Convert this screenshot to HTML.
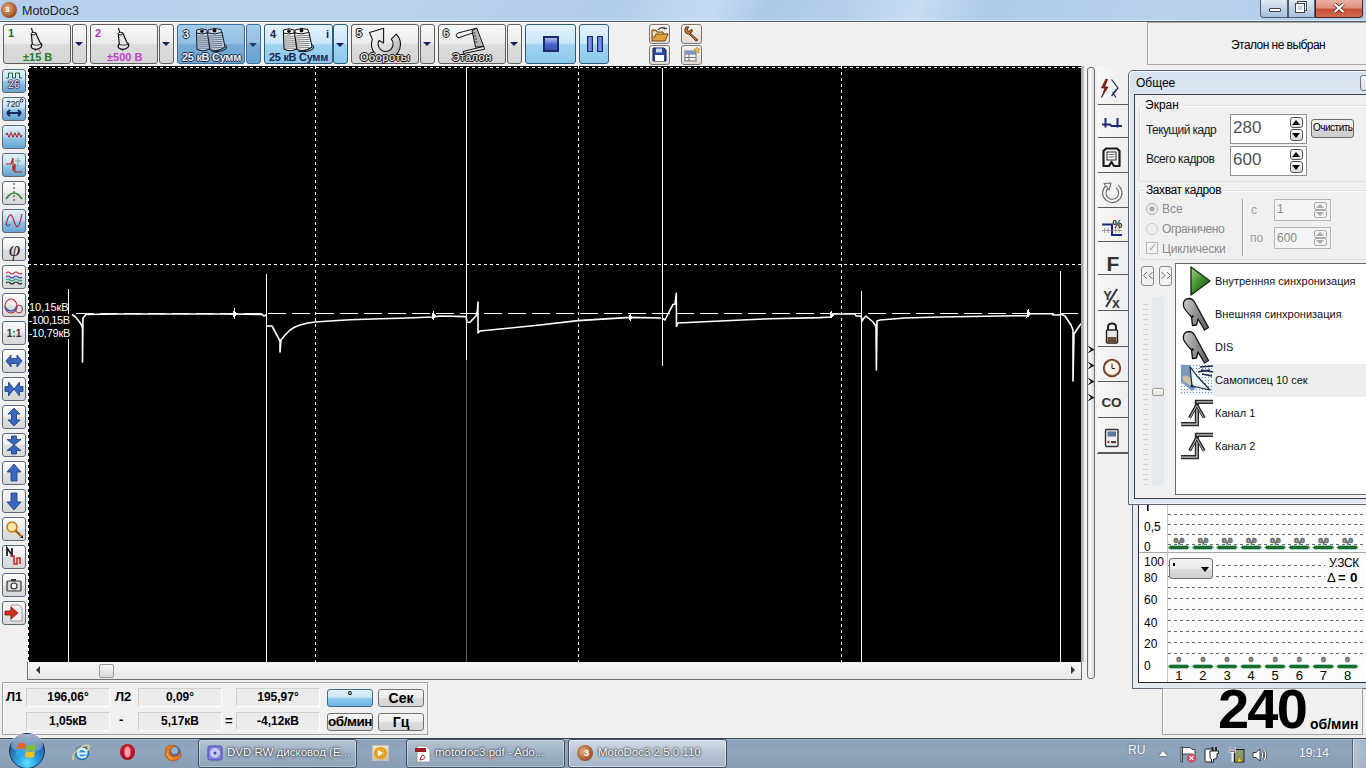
<!DOCTYPE html>
<html><head><meta charset="utf-8">
<style>
*{box-sizing:border-box}
html,body{margin:0;padding:0}
body{width:1366px;height:768px;overflow:hidden;position:relative;background:#f0f0f0;font-family:"Liberation Sans",sans-serif;font-size:12px;color:#000}
.a{position:absolute}
.tb{position:absolute;border:1px solid #8a8a8a;border-radius:3px;background:linear-gradient(#f7f7f7 0%,#ececec 48%,#dcdcdc 52%,#d5d5d5 100%)}
.tbb{position:absolute;border:1px solid #3a6f9a;border-radius:3px;background:linear-gradient(#a6cce8 0%,#92bfe2 48%,#78acd6 52%,#6aa2d0 100%)}
.tbl{position:absolute;border:1px solid #3c7fb1;border-radius:3px;background:linear-gradient(#e4f3fc 0%,#c9e7f7 48%,#a0d4f0 52%,#8cc8ea 100%)}
.dd{position:absolute;width:0;height:0;border-left:5px solid transparent;border-right:5px solid transparent;border-top:6px solid #15205a}
.num{position:absolute;font-size:13px;font-weight:bold;line-height:13px}
.lab{position:absolute;font-size:12px;font-weight:bold;line-height:12px;white-space:nowrap}
.lb{position:absolute;left:2px;width:24px;height:24px;border:1px solid #5a6a78;border-radius:3px}
.lbb{background:linear-gradient(#e2f3fb 0%,#bfe0f2 45%,#92c6e4 55%,#64a4d0 100%)}
.lbg{background:linear-gradient(#fafafa 0%,#eeeeee 48%,#e0e0e0 52%,#d8d8d8 100%)}
.rb{position:absolute;left:1097px;width:31px;height:34px;border-bottom:2px solid #6a6a6a;background:linear-gradient(#f4f4f4,#ececec)}
</style></head><body>

<div class="a" style="left:0;top:0;width:1366px;height:20px;background:linear-gradient(115deg,#b4cfec 0%,#bad4ee 25%,#b2cdea 45%,#c4dcf3 52%,#adc9e8 56%,#b6d0ec 62%,#c6ddf3 67%,#afcbe9 72%,#b8d2ed 85%,#b2cdea 100%)"></div><div class="a" style="left:0;top:20px;width:1366px;height:1px;background:#d8ecfa"></div><div class="a" style="left:0;top:21px;width:1366px;height:1px;background:#4e5a68"></div><div class="a" style="left:0;top:22px;width:1366px;height:1px;background:#fbfbfb"></div>
<div class="a" style="left:1px;top:2px;width:16px;height:16px;border-radius:50%;background:radial-gradient(circle at 40% 40%,#e6b088,#a45428 65%,#6a2c10)"></div>
<div class="a" style="left:5px;top:6px;font-size:8px;font-weight:bold;color:#fff;line-height:8px">3</div>
<div class="a" style="left:22px;top:4px;font-size:12.5px;color:#1a1a1a;line-height:15px">MotoDoc3</div>
<div class="a" style="left:1260px;top:0;width:28px;height:18px;border:1px solid #4d5f78;border-top:none;border-radius:0 0 0 4px;background:linear-gradient(#dde9f5,#c2d4e8 50%,#a9c0da)"></div>
<div class="a" style="left:1269px;top:8px;width:12px;height:4px;background:#fff;border:1px solid #3a4454;border-radius:1px"></div>
<div class="a" style="left:1288px;top:0;width:27px;height:18px;border:1px solid #4d5f78;border-top:none;background:linear-gradient(#dde9f5,#c2d4e8 50%,#a9c0da)"></div>
<div class="a" style="left:1298px;top:2px;width:8px;height:8px;border:2px solid #fff;box-shadow:0 0 0 1px #3a4454"></div><div class="a" style="left:1296px;top:4px;width:8px;height:8px;border:2px solid #fff;box-shadow:0 0 0 1px #3a4454;background:#c0d2e6"></div>
<div class="a" style="left:1315px;top:0;width:48px;height:18px;border:1px solid #4a2020;border-top:none;border-radius:0 0 4px 0;background:linear-gradient(#eab0a4 0%,#e09080 45%,#c8503a 55%,#d06a50 100%)"></div><svg class="a" style="left:1333px;top:3px" width="12" height="10" viewBox="0 0 12 10"><path d="M1.5 1 L10.5 9 M10.5 1 L1.5 9" stroke="#3a2020" stroke-width="3.6"/><path d="M1.5 1 L10.5 9 M10.5 1 L1.5 9" stroke="#fff" stroke-width="2.2"/></svg>

<!-- toolbar buttons -->
<div class="tb" style="left:3px;top:24px;width:68px;height:40px;border-color:#5e5e5e"></div>
<div class="num" style="left:8px;top:27px;color:#1d6b2c;font-size:11px">1</div>
<svg class="a" style="left:26px;top:27px" width="20" height="26" viewBox="0 0 20 26"><path d="M5.4 1 L6.8 5.5" stroke="#222" stroke-width="1.2"/><path d="M5.3 7 L6.3 17 Q4.3 18.5 5.8 21 Q9 23.2 13 21.6 Q16.6 19.6 15.6 17 L14 15.5 L9.6 5.8 Q7 4.8 5.3 7 Z" fill="#e6e6e6" stroke="#111" stroke-width="1.2" stroke-linejoin="round"/><ellipse cx="7.5" cy="6.6" rx="2.2" ry="1.3" fill="#fff" stroke="#111" stroke-width="1"/><path d="M6.3 17.5 Q10 19 15 17.5" fill="none" stroke="#222" stroke-width="0.9"/><path d="M8 22 L9.5 24 L11 22" fill="#222"/><path d="M12 22 L15 26" stroke="#9a4aa0" stroke-width="1"/></svg>
<div class="lab" style="left:23px;top:51px;color:#237a30;font-size:11px">±15 В</div>
<div class="tb" style="left:72px;top:24px;width:15px;height:40px;border-color:#5e5e5e"></div>
<div class="dd" style="left:75px;top:42px;border-left-width:4px;border-right-width:4px;border-top-width:4px"></div>

<div class="tb" style="left:90px;top:24px;width:68px;height:40px;border-color:#5e5e5e"></div>
<div class="num" style="left:95px;top:27px;color:#b038b8;font-size:11px">2</div>
<svg class="a" style="left:113px;top:27px" width="20" height="26" viewBox="0 0 20 26"><path d="M5.4 1 L6.8 5.5" stroke="#222" stroke-width="1.2"/><path d="M5.3 7 L6.3 17 Q4.3 18.5 5.8 21 Q9 23.2 13 21.6 Q16.6 19.6 15.6 17 L14 15.5 L9.6 5.8 Q7 4.8 5.3 7 Z" fill="#e6e6e6" stroke="#111" stroke-width="1.2" stroke-linejoin="round"/><ellipse cx="7.5" cy="6.6" rx="2.2" ry="1.3" fill="#fff" stroke="#111" stroke-width="1"/><path d="M6.3 17.5 Q10 19 15 17.5" fill="none" stroke="#222" stroke-width="0.9"/><path d="M8 22 L9.5 24 L11 22" fill="#222"/></svg>
<div class="lab" style="left:107px;top:51px;color:#c040c8;font-size:11px">±500 В</div>
<div class="tb" style="left:159px;top:24px;width:15px;height:40px;border-color:#5e5e5e"></div>
<div class="dd" style="left:162px;top:42px;border-left-width:4px;border-right-width:4px;border-top-width:4px"></div>

<div class="tbb" style="left:177px;top:24px;width:68px;height:40px"></div>
<div class="num" style="left:183px;top:28px;color:#e8f0f8;font-size:11px;text-shadow:1px 0 #1a2a44,-1px 0 #1a2a44,0 1px #1a2a44,0 -1px #1a2a44">3</div>
<svg class="a" style="left:194px;top:27px" width="36" height="26" viewBox="0 0 36 26"><path d="M2.5 6 Q8 3 14.5 6 L15.5 22 Q9 25.5 3 22 Z" fill="#c4d6e6" stroke="#1a2233" stroke-width="1.1"/><path d="M3.5 9 L14.5 9.3 M3.5 11 L14.5 11.3 M3.5 13 L14.5 13.3 M3.5 15 L14.5 15.3 M3.5 17 L14.5 17.3 M3.5 19 L14.5 19.3 M3.5 21 L14.5 21.3 " stroke="#1a2233" stroke-width="0.7" opacity="0.75"/><path d="M2.5 3 Q8 0.5 13 3 L13 6 Q8 8 2.5 6 Z" fill="#c4d6e6" stroke="#1a2233" stroke-width="1"/><circle cx="8" cy="4.3" r="1.8" fill="#111"/><path d="M13.5 6 Q21 2.5 28 5.5 L31 20 Q24 25.5 16 22.5 Z" fill="#c4d6e6" stroke="#1a2233" stroke-width="1.1"/><path d="M15 9 L28.5 8.4 M15 11 L28.5 10.4 M15 13 L28.5 12.4 M15 15 L28.5 14.4 M15 17 L28.5 16.4 M15 19 L28.5 18.4 M15 21 L28.5 20.4 " stroke="#1a2233" stroke-width="0.7" opacity="0.75"/><path d="M14 3 Q20.5 0 27 2.5 L27.5 5.5 Q21 8 14 6 Z" fill="#c4d6e6" stroke="#1a2233" stroke-width="1"/><circle cx="20.5" cy="3.5" r="1.9" fill="#111"/><path d="M30.5 17 Q34 19 32 22 Q26 26 17 24" fill="none" stroke="#1a2233" stroke-width="1"/></svg>
<div class="lab" style="left:182px;top:51px;color:#e8f0f8;font-size:11px;text-shadow:1px 0 #1a2a44,-1px 0 #1a2a44,0 1px #1a2a44,0 -1px #1a2a44;letter-spacing:-0.3px">25 кВ Сумм</div>
<div class="tbb" style="left:246px;top:24px;width:15px;height:40px"></div>
<div class="dd" style="left:249px;top:43px;border-left-width:4px;border-right-width:4px;border-top-width:4px;border-top-color:#1d3a6a"></div>

<div class="tbl" style="left:264px;top:24px;width:69px;height:40px;border-color:#2f5a7a"></div>
<div class="num" style="left:270px;top:28px;color:#1a2244;font-size:11px">4</div>
<div class="num" style="left:326px;top:28px;color:#1a2244;font-size:11px">i</div>
<svg class="a" style="left:281px;top:27px" width="36" height="26" viewBox="0 0 36 26"><path d="M2.5 6 Q8 3 14.5 6 L15.5 22 Q9 25.5 3 22 Z" fill="#f6f8fa" stroke="#111" stroke-width="1.1"/><path d="M3.5 9 L14.5 9.3 M3.5 11 L14.5 11.3 M3.5 13 L14.5 13.3 M3.5 15 L14.5 15.3 M3.5 17 L14.5 17.3 M3.5 19 L14.5 19.3 M3.5 21 L14.5 21.3 " stroke="#111" stroke-width="0.7" opacity="0.75"/><path d="M2.5 3 Q8 0.5 13 3 L13 6 Q8 8 2.5 6 Z" fill="#f6f8fa" stroke="#111" stroke-width="1"/><circle cx="8" cy="4.3" r="1.8" fill="#111"/><path d="M13.5 6 Q21 2.5 28 5.5 L31 20 Q24 25.5 16 22.5 Z" fill="#f6f8fa" stroke="#111" stroke-width="1.1"/><path d="M15 9 L28.5 8.4 M15 11 L28.5 10.4 M15 13 L28.5 12.4 M15 15 L28.5 14.4 M15 17 L28.5 16.4 M15 19 L28.5 18.4 M15 21 L28.5 20.4 " stroke="#111" stroke-width="0.7" opacity="0.75"/><path d="M14 3 Q20.5 0 27 2.5 L27.5 5.5 Q21 8 14 6 Z" fill="#f6f8fa" stroke="#111" stroke-width="1"/><circle cx="20.5" cy="3.5" r="1.9" fill="#111"/><path d="M30.5 17 Q34 19 32 22 Q26 26 17 24" fill="none" stroke="#111" stroke-width="1"/></svg>
<div class="lab" style="left:269px;top:51px;color:#1a2550;font-size:11px;letter-spacing:-0.3px">25 кВ Сумм</div>
<div class="tbl" style="left:333px;top:24px;width:15px;height:40px;border-color:#2f5a7a"></div>
<div class="dd" style="left:336px;top:43px;border-left-width:4px;border-right-width:4px;border-top-width:4px"></div>

<div class="tb" style="left:351px;top:24px;width:68px;height:40px;border-color:#5e5e5e"></div>
<div class="num" style="left:356px;top:27px;color:#ddd;font-size:11px;text-shadow:1px 0 #222,-1px 0 #222,0 1px #222,0 -1px #222">5</div>
<svg class="a" style="left:369px;top:27px" width="36" height="27" viewBox="0 0 36 27"><defs><linearGradient id="rg" x1="0" y1="0" x2="1" y2="1"><stop offset="0" stop-color="#fafafa"/><stop offset="0.6" stop-color="#d8d8d8"/><stop offset="1" stop-color="#9a9a9a"/></linearGradient></defs><path d="M27.25 7.15 A14.5 14.5 0 1 1 3.4 12.4 L0.5 5.5 L14.6 1.2 L14.6 16 L10 13.4 A7.5 7.5 0 1 0 22.3 12.1 Z" fill="url(#rg)" stroke="#111" stroke-width="1.1" stroke-linejoin="round"/></svg>
<div class="lab" style="left:360px;top:51px;color:#d8d8d8;font-size:11px;text-shadow:1px 0 #111,-1px 0 #111,0 1px #111,0 -1px #111">Обороты</div>
<div class="tb" style="left:420px;top:24px;width:15px;height:40px;border-color:#5e5e5e"></div>
<div class="dd" style="left:423px;top:42px;border-left-width:4px;border-right-width:4px;border-top-width:4px"></div>

<div class="tb" style="left:438px;top:24px;width:68px;height:40px;border-color:#5e5e5e"></div>
<div class="num" style="left:443px;top:27px;color:#ddd;font-size:11px;text-shadow:1px 0 #222,-1px 0 #222,0 1px #222,0 -1px #222">6</div>
<svg class="a" style="left:454px;top:27px" width="34" height="27" viewBox="0 0 34 27"><path d="M3 10 Q0.5 7.5 4 6 L22.5 1.2 L23 4.5 L5 10.6 Q4 10.9 3 10 Z" fill="#f4f4f4" stroke="#111" stroke-width="1"/><path d="M18 3.6 L22.8 1.2 L29.7 19.4 L21.6 20.2 Z" fill="#b8b8b8" stroke="#111" stroke-width="1"/><path d="M19.3 6 L21.3 6 M20 9 L22 9 M20.8 12 L22.8 12 M21.4 15 L23.4 15" stroke="#111" stroke-width="0.9"/><path d="M9 24.5 L29.8 19.4 L30.6 22.2 L9.5 26.5 Z" fill="#e8e8e8" stroke="#111" stroke-width="1"/></svg>
<div class="lab" style="left:452px;top:51px;color:#d8d8d8;font-size:11px;text-shadow:1px 0 #111,-1px 0 #111,0 1px #111,0 -1px #111">Эталон</div>
<div class="tb" style="left:507px;top:24px;width:15px;height:40px;border-color:#5e5e5e"></div>
<div class="dd" style="left:510px;top:42px;border-left-width:4px;border-right-width:4px;border-top-width:4px"></div>

<!-- stop / pause -->
<div class="tbl" style="left:525px;top:24px;width:51px;height:40px;border-color:#2f5a7a"></div>
<div class="a" style="left:543px;top:36px;width:16px;height:16px;border:2px solid #1a2a6a;background:linear-gradient(#a8b8ec 0%,#7890e0 30%,#4a62c8 55%,#3a52b8 100%)"></div>
<div class="tbl" style="left:579px;top:24px;width:30px;height:40px;border-color:#2f5a7a"></div>
<div class="a" style="left:587px;top:36px;width:6px;height:16px;border:1px solid #1a2a6a;background:linear-gradient(90deg,#4a62c8,#8aa0e8,#4a62c8)"></div>
<div class="a" style="left:597px;top:36px;width:6px;height:16px;border:1px solid #1a2a6a;background:linear-gradient(90deg,#4a62c8,#8aa0e8,#4a62c8)"></div>

<!-- small icons -->
<div class="tb" style="left:649px;top:24px;width:21px;height:20px;border-color:#777;background:linear-gradient(#f6f2ee,#e4ddd6)"></div>
<svg class="a" style="left:651px;top:26px" width="18" height="16" viewBox="0 0 18 16"><path d="M1 6 L1 15 L14 15 L17 8 L5 8 L3 12" fill="#e0a040" stroke="#6a4010" stroke-width="1"/><path d="M1 6 L1 4 L5 4 L6 6 L12 6 L12 8" fill="#f0c070" stroke="#6a4010" stroke-width="1"/><path d="M7 4 Q10 0 14 3 L13 1 M14 3 L16 2" stroke="#334" fill="none" stroke-width="1.2"/></svg>
<div class="tb" style="left:649px;top:45px;width:21px;height:20px;border-color:#777;background:linear-gradient(#f6f2ee,#e4ddd6)"></div>
<svg class="a" style="left:652px;top:47px" width="15" height="15" viewBox="0 0 15 15"><path d="M1 1 H12 L14 3 V14 H1 Z" fill="#2a4a9a" stroke="#102050"/><rect x="4" y="1.5" width="6" height="4" fill="#c8d4f0"/><rect x="3" y="8" width="9" height="6" fill="#fff"/></svg>
<div class="tb" style="left:681px;top:24px;width:21px;height:20px;border-color:#777;background:linear-gradient(#f6f2ee,#e4ddd6)"></div>
<svg class="a" style="left:683px;top:26px" width="17" height="16" viewBox="0 0 17 16"><path d="M2 3 Q2 0 6 1 L4 3 L5 5 L7 5 L9 3 Q10 7 7 7 L15 14 L13 15 L6 8 Q1 8 2 3 Z" fill="#c87830" stroke="#5a3010" stroke-width="1"/></svg>
<div class="tb" style="left:681px;top:45px;width:21px;height:20px;border-color:#777;background:linear-gradient(#f6f2ee,#e4ddd6)"></div>
<svg class="a" style="left:684px;top:47px" width="16" height="15" viewBox="0 0 16 15"><rect x="1" y="4" width="11" height="10" fill="#f4f4f4" stroke="#777"/><path d="M1 7H12M1 10.5H12M5 4V14" stroke="#777"/><rect x="1" y="4" width="11" height="3" fill="#7a9ac8"/><path d="M13 0 L14 2 L16 2 L14.5 3.5 L15 6 L13 4.5 L11 6 L11.5 3.5 L10 2 L12 2Z" fill="#e8c840" stroke="#8a6a10" stroke-width="0.5"/></svg>

<!-- status box -->
<div class="a" style="left:1147px;top:22px;width:222px;height:43px;border:1px solid #a8a8a8;border-right:none;background:#f0f0f0"></div>
<div class="a" style="left:1231px;top:39px;font-size:12px;line-height:13px;color:#000;letter-spacing:-0.55px">Эталон не выбран</div>

<!-- left toolbar -->
<div class="lb lbb" style="top:69px"></div>
<svg class="a" style="left:2px;top:69px" width="24" height="24" viewBox="0 0 24 24"><path d="M4 9 H6.5 V4 H10.5 V9 H13.5 V4 H17.5 V9 H20" fill="none" stroke="#2a5a40" stroke-width="1"/><text x="12" y="19" font-size="10" text-anchor="middle" fill="#eae4f2" stroke="#4a3a66" stroke-width="1.6" paint-order="stroke" font-family="Liberation Sans" letter-spacing="0.5">26</text></svg>
<div class="lb lbb" style="top:97px"></div>
<svg class="a" style="left:2px;top:97px" width="24" height="24" viewBox="0 0 24 24"><text x="11" y="10" font-size="8.5" text-anchor="middle" fill="#222" font-family="Liberation Sans">720</text><circle cx="19.5" cy="3.5" r="1.5" fill="none" stroke="#222"/><path d="M5 16 H19 M5 16 L8 13 M5 16 L8 19 M19 16 L16 13 M19 16 L16 19" stroke="#1a2a5a" stroke-width="2" fill="none"/></svg>
<div class="lb lbb" style="top:125px"></div>
<svg class="a" style="left:2px;top:125px" width="24" height="24" viewBox="0 0 24 24"><path d="M4 10 Q5 6 6 10 T8 10 T10 10 T12 10 T14 10 T16 10 T18 10 T20 10" fill="none" stroke="#a02030" stroke-width="1.1"/><path d="M9 6 V10 M16 6 V10" stroke="#b06060" stroke-width="0.8"/></svg>
<div class="lb lbb" style="top:153px"></div>
<svg class="a" style="left:2px;top:153px" width="24" height="24" viewBox="0 0 24 24"><path d="M4 11 H9 L11 5 L11 18 L13 11 V19 H20" fill="none" stroke="#c02020" stroke-width="1.2"/><path d="M16 5 V14 M13 8 H19" stroke="#7a9a7a" stroke-width="0.8" fill="none"/></svg>
<div class="lb lbg" style="top:181px"></div>
<svg class="a" style="left:2px;top:181px" width="24" height="24" viewBox="0 0 24 24"><path d="M12 2 V21" stroke="#333" stroke-width="1" stroke-dasharray="2 2"/><path d="M4 18 Q12 6 20 18" fill="none" stroke="#2a8a3a" stroke-width="1.6"/></svg>
<div class="lb lbb" style="top:209px"></div>
<svg class="a" style="left:2px;top:209px" width="24" height="24" viewBox="0 0 24 24"><path d="M9 3 V20 M14 3 V20 M18 3 V20" stroke="#d8a0b0" stroke-width="0.6" opacity="0.6"/><path d="M4 16 Q8 -2 12 12 T20 5" fill="none" stroke="#b02848" stroke-width="1.2"/><path d="M4 15 Q6 19 8 15" fill="none" stroke="#203870" stroke-width="1"/></svg>
<div class="lb lbg" style="top:237px"></div>
<svg class="a" style="left:2px;top:237px" width="24" height="24" viewBox="0 0 24 24"><text x="12.5" y="18.5" font-size="21" text-anchor="middle" fill="#2a2a2a" font-style="italic" font-family="Liberation Serif">φ</text></svg>
<div class="lb lbg" style="top:265px"></div>
<svg class="a" style="left:2px;top:265px" width="24" height="24" viewBox="0 0 24 24"><path d="M4 8 q2 -2 4 0 t4 0 t4 0 t4 0" fill="none" stroke="#c03040" stroke-width="1.1"/><path d="M4 12 q2 -2 4 0 t4 0 t4 0 t4 0" fill="none" stroke="#3040b0" stroke-width="1.1"/><path d="M4 15 q2 -2 4 0 t4 0 t4 0 t4 0" fill="none" stroke="#20a080" stroke-width="1.1"/><path d="M4 18 q2 -2 4 0 t4 0 t4 0 t4 0" fill="none" stroke="#222" stroke-width="1.1"/></svg>
<div class="lb lbg" style="top:293px"></div>
<svg class="a" style="left:2px;top:293px" width="24" height="24" viewBox="0 0 24 24"><ellipse cx="9" cy="13" rx="6" ry="7" fill="none" stroke="#c03030" stroke-width="1.2"/><path d="M3 14 Q9 22 15 14" fill="none" stroke="#3050c0" stroke-width="1.4"/><ellipse cx="17" cy="16" rx="3.5" ry="4" fill="none" stroke="#a03050" stroke-width="1"/></svg>
<div class="lb lbg" style="top:321px"></div>
<svg class="a" style="left:2px;top:321px" width="24" height="24" viewBox="0 0 24 24"><text x="12" y="16" font-size="10" font-weight="bold" text-anchor="middle" fill="#333" font-family="Liberation Sans">1:1</text></svg>
<div class="lb lbg" style="top:349px"></div>
<svg class="a" style="left:2px;top:349px" width="24" height="24" viewBox="0 0 24 24"><path d="M4 12 L9 6 V9.5 H15 V6 L20 12 L15 18 V14.5 H9 V18 Z" fill="#3a68c0" stroke="#1a3a7a" stroke-width="0.8"/></svg>
<div class="lb lbg" style="top:377px"></div>
<svg class="a" style="left:2px;top:377px" width="24" height="24" viewBox="0 0 24 24"><path d="M3 9.5 H6.5 V5 L12 12 L6.5 19 V14.5 H3 Z M21 9.5 H17.5 V5 L12 12 L17.5 19 V14.5 H21 Z" fill="#3a68c0" stroke="#1a3a7a" stroke-width="0.8"/></svg>
<div class="lb lbg" style="top:405px"></div>
<svg class="a" style="left:2px;top:405px" width="24" height="24" viewBox="0 0 24 24"><path d="M12 3 L18 9 H14.5 V15 H18 L12 21 L6 15 H9.5 V9 H6 Z" fill="#3a68c0" stroke="#1a3a7a" stroke-width="0.8"/></svg>
<div class="lb lbg" style="top:433px"></div>
<svg class="a" style="left:2px;top:433px" width="24" height="24" viewBox="0 0 24 24"><path d="M9.5 3 V6.5 H5 L12 12 L19 6.5 H14.5 V3 Z M9.5 21 V17.5 H5 L12 12 L19 17.5 H14.5 V21 Z" fill="#3a68c0" stroke="#1a3a7a" stroke-width="0.8"/></svg>
<div class="lb lbg" style="top:461px"></div>
<svg class="a" style="left:2px;top:461px" width="24" height="24" viewBox="0 0 24 24"><path d="M12 3 L19 11 H15 V20 H9 V11 H5 Z" fill="#3a68c0" stroke="#1a3a7a" stroke-width="0.8"/></svg>
<div class="lb lbg" style="top:489px"></div>
<svg class="a" style="left:2px;top:489px" width="24" height="24" viewBox="0 0 24 24"><path d="M12 21 L19 13 H15 V4 H9 V13 H5 Z" fill="#3a68c0" stroke="#1a3a7a" stroke-width="0.8"/></svg>
<div class="lb lbg" style="top:517px"></div>
<svg class="a" style="left:2px;top:517px" width="24" height="24" viewBox="0 0 24 24"><circle cx="10" cy="10" r="5" fill="#f8e8a0" stroke="#c08020" stroke-width="1.6"/><path d="M13.5 13.5 L19 19" stroke="#a06010" stroke-width="2.4"/><path d="M18 21 L21 21 L21 18" fill="#111"/></svg>
<div class="lb lbg" style="top:545px"></div>
<svg class="a" style="left:2px;top:545px" width="24" height="24" viewBox="0 0 24 24"><path d="M5 11 V3 L10 10 V3" fill="none" stroke="#222" stroke-width="1.8"/><path d="M8 11 H12 V19 H15 V13 H18 V19" fill="none" stroke="#c03030" stroke-width="1.6"/></svg>
<div class="lb lbg" style="top:573px"></div>
<svg class="a" style="left:2px;top:573px" width="24" height="24" viewBox="0 0 24 24"><rect x="5" y="8" width="14" height="10" rx="1" fill="#ddd" stroke="#333" stroke-width="1.2"/><circle cx="12" cy="13" r="3" fill="#fff" stroke="#333" stroke-width="1.2"/><rect x="9" y="6" width="5" height="2" fill="#333"/></svg>
<div class="lb lbg" style="top:601px"></div>
<svg class="a" style="left:2px;top:601px" width="24" height="24" viewBox="0 0 24 24"><path d="M9 4 H17 L20 7 V20 H9 Z" fill="#f6f0f0" stroke="#888" stroke-width="0.8"/><path d="M3 10 H9 V6 L16 12 L9 18 V14 H3 Z" fill="#d03020" stroke="#801010" stroke-width="0.8"/></svg>
<!-- scope -->
<svg class="a" style="left:28px;top:66px" width="1054" height="596" viewBox="28 66 1054 596" shape-rendering="crispEdges">
<rect x="28" y="66" width="1054" height="596" fill="#000"/>
<g stroke="#fff" stroke-width="1" stroke-dasharray="3 3">
<line x1="28" y1="67.5" x2="1082" y2="67.5"/>
<line x1="28.5" y1="66" x2="28.5" y2="662"/>
<line x1="28" y1="264.5" x2="1082" y2="264.5"/>
<line x1="315.5" y1="66" x2="315.5" y2="662"/>
<line x1="578.5" y1="66" x2="578.5" y2="662"/>
<line x1="841.5" y1="66" x2="841.5" y2="662"/>
</g>
<g stroke="#fff" stroke-width="1">
<line x1="68.5" y1="289" x2="68.5" y2="662"/>
<line x1="266.5" y1="274" x2="266.5" y2="662"/>
<line x1="466.5" y1="68" x2="466.5" y2="360"/>
<line x1="662.5" y1="68" x2="662.5" y2="366"/>
<line x1="861.5" y1="291" x2="861.5" y2="662"/>
<line x1="1060.5" y1="271" x2="1060.5" y2="662"/>
</g>
<line x1="466.5" y1="360" x2="466.5" y2="662" stroke="#555" stroke-width="1"/>
<line x1="70" y1="313.5" x2="1078" y2="313.5" stroke="#fff" stroke-width="1" stroke-dasharray="18 6" stroke-dashoffset="-5.6"/>
<g fill="none" stroke="#fff" stroke-width="1.6" stroke-linejoin="round" shape-rendering="auto">
<polyline points="72,314.5 75,316.5 78,320 81,324 82.5,328 82.5,362 83,318 86,314.5 120,314 234,314 262,314.5 264,316 266,315"/>
<polyline points="267,326 272,326 280,341 280,352 281,340 285,335 290,330 295,327 300,325 308,323 315,322 330,321 350,319.8 380,318.8 400,318.3 433,317 440,316 466,316.6"/>
<polyline points="466,316.6 467,322 470,322.3 474,318 476,316 477.5,310 478,302 478,333 480,331 490,330 540,325 578,320.6 630,317.4 661,318"/>
<polyline points="662,318 665,320 670,310 673,304.5 675,304 676.3,293.4 676.5,326.4 678,323 720,321 770,318.7 820,317.6 831,317 833,314 855,314 856,316 861,316"/>
<polyline points="861,316 862,321 864,318 866,316 873,322 876,326 876.4,370 877,321 880,320 905,318 940,317 1000,316 1028,315.6 1030,313.8 1052,313.8 1053,315 1061,315"/>
<polyline points="1061,314 1065,316 1071,325 1073,330 1073,381 1074,334 1080,325 1082,323"/>
</g>
<g fill="#fff" stroke="#fff" stroke-width="1">
<path d="M234.5 308 V319 M230 314 L236 314" /><path d="M233 311 L237 314 L233 317 Z"/>
<path d="M433.5 311 V320" /><path d="M432 313 L436 316 L432 319 Z"/>
<path d="M630.5 313 V321" /><path d="M629 315 L633 317.5 L629 320 Z"/>
<path d="M831.5 311 V318" /><path d="M830 312 L834 315 L830 318 Z"/>
<path d="M1028.5 309 V317" /><path d="M1027 310.5 L1031 313.5 L1027 316.5 Z"/>
</g>
<g font-family="Liberation Sans" font-size="11" fill="#fff">
<text x="29" y="311">10,15кВ</text>
<rect x="28" y="314" width="43" height="25" fill="#000" stroke="none"/>
<text x="28.5" y="323.5" letter-spacing="-0.45">-100,15В</text>
<text x="28.5" y="337" letter-spacing="-0.2">-10,79кВ</text>
</g>
</svg>
<!-- scope right border & scrollbar -->
<div class="a" style="left:1081px;top:66px;width:3px;height:596px;background:linear-gradient(90deg,#a0a0a0,#c8c8c8)"></div>
<div class="a" style="left:27px;top:662px;width:1055px;height:18px;border:1px solid #707070;border-top:none;background:linear-gradient(#f6f6f6,#e8e8e8)"></div>
<div class="a" style="left:36px;top:666px;width:0;height:0;border-top:4px solid transparent;border-bottom:4px solid transparent;border-right:4px solid #333"></div>
<div class="a" style="left:1071px;top:666px;width:0;height:0;border-top:4px solid transparent;border-bottom:4px solid transparent;border-left:4px solid #333"></div>
<div class="a" style="left:99px;top:664px;width:15px;height:14px;border:1px solid #9a9a9a;border-radius:2px;background:linear-gradient(#f8f8f8,#d8d8d8)"></div>
<div class="a" style="left:1087px;top:67px;width:8px;height:612px;border:1px solid #707070;border-radius:3px;background:linear-gradient(90deg,#e6e6e6,#f8f8f8 40%,#d6d6d6)"></div>
<svg class="a" style="left:1087px;top:343px" width="9" height="60" viewBox="0 0 9 60"><g fill="#000"><path d="M0.5 2.5 L7.5 6.5 L0.5 10.5 L3.8 6.5 Z"/><path d="M0.5 18.5 L7.5 22.5 L0.5 26.5 L3.8 22.5 Z"/><path d="M0.5 34.5 L7.5 38.5 L0.5 42.5 L3.8 38.5 Z"/><path d="M0.5 50.5 L7.5 54.5 L0.5 58.5 L3.8 54.5 Z"/></g></svg>

<!-- right toolbar -->
<div class="a" style="left:1097px;top:67px;width:31px;height:39px;border-left:1px solid #fafafa;border-bottom:2px solid #5a5a5a;background:linear-gradient(90deg,#f6f6f6,#eeeeee)"></div>
<div class="a" style="left:1097px;top:105px;width:31px;height:34px;border-left:1px solid #fafafa;border-bottom:2px solid #5a5a5a;background:linear-gradient(90deg,#f6f6f6,#eeeeee)"></div>
<div class="a" style="left:1097px;top:138px;width:31px;height:36px;border-left:1px solid #fafafa;border-bottom:2px solid #5a5a5a;background:linear-gradient(90deg,#f6f6f6,#eeeeee)"></div>
<div class="a" style="left:1097px;top:173px;width:31px;height:36px;border-left:1px solid #fafafa;border-bottom:2px solid #5a5a5a;background:linear-gradient(90deg,#f6f6f6,#eeeeee)"></div>
<div class="a" style="left:1097px;top:208px;width:31px;height:35px;border-left:1px solid #fafafa;border-bottom:2px solid #5a5a5a;background:linear-gradient(90deg,#f6f6f6,#eeeeee)"></div>
<div class="a" style="left:1097px;top:242px;width:31px;height:34px;border-left:1px solid #fafafa;border-bottom:2px solid #5a5a5a;background:linear-gradient(90deg,#f6f6f6,#eeeeee)"></div>
<div class="a" style="left:1097px;top:275px;width:31px;height:37px;border-left:1px solid #fafafa;border-bottom:2px solid #5a5a5a;background:linear-gradient(90deg,#f6f6f6,#eeeeee)"></div>
<div class="a" style="left:1097px;top:311px;width:31px;height:37px;border-left:1px solid #fafafa;border-bottom:2px solid #5a5a5a;background:linear-gradient(90deg,#f6f6f6,#eeeeee)"></div>
<div class="a" style="left:1097px;top:347px;width:31px;height:36px;border-left:1px solid #fafafa;border-bottom:2px solid #5a5a5a;background:linear-gradient(90deg,#f6f6f6,#eeeeee)"></div>
<div class="a" style="left:1097px;top:382px;width:31px;height:37px;border-left:1px solid #fafafa;border-bottom:2px solid #5a5a5a;background:linear-gradient(90deg,#f6f6f6,#eeeeee)"></div>
<div class="a" style="left:1097px;top:418px;width:31px;height:36px;border-left:1px solid #fafafa;border-bottom:2px solid #5a5a5a;background:linear-gradient(90deg,#f6f6f6,#eeeeee)"></div>
<svg class="a" style="left:1097px;top:67px" width="31" height="386" viewBox="1097 67 31 386">

<path d="M1106 79 L1101.5 88 H1105 L1101.5 97.5 L1108 87 H1104.5 L1107.5 79.5 Z" fill="#8a2a1a" stroke="#5a1a0a" stroke-width="0.8" stroke-linejoin="round"/>
<path d="M1111.5 79.5 L1118 88 L1111.5 96 M1118 88 L1113 93 L1116 97.5" fill="none" stroke="#1a2258" stroke-width="1.2"/>
<path d="M1102 124.5 H1110 L1111.5 126 H1122" fill="none" stroke="#1a2a7a" stroke-width="2"/>
<path d="M1105.5 118 V127.5 M1117.5 118 V127.5" stroke="#1a2a7a" stroke-width="2"/>
<path d="M1106 148.5 H1117 L1119.5 151 V166 H1114 L1111.5 162 L1109 166 H1103.5 V151 Z" fill="#f6f6f6" stroke="#1a1a1a" stroke-width="2.2" stroke-linejoin="round"/>
<rect x="1107" y="152" width="9" height="8" fill="#fff" stroke="#222" stroke-width="1"/>
<path d="M1108.5 154.5 H1114.5 M1108.5 157 H1114.5" stroke="#444" stroke-width="0.8"/>
<path d="M1107 187 A8 8 0 1 0 1117 186.5" fill="none" stroke="#6a6a6a" stroke-width="4.4"/>
<path d="M1107 187 A8 8 0 1 0 1117 186.5" fill="none" stroke="#fbfbfb" stroke-width="2.2"/>
<path d="M1104 183.5 L1111 183 L1109 190 Z" fill="#fbfbfb" stroke="#6a6a6a" stroke-width="1.1" stroke-linejoin="round"/>
<path d="M1102 224.5 H1112 V235 H1122" fill="none" stroke="#1a2a7a" stroke-width="2"/>
<path d="M1102 230.5 H1122 M1104.5 228 V233 M1108 228 V233 M1115.5 228 V233 M1119 228 V233" stroke="#8a8a8a" stroke-width="0.8"/>
<text x="1117.5" y="228" font-size="11" font-weight="bold" text-anchor="middle" fill="#222" font-family="Liberation Sans">%</text>
<text x="1113" y="270.5" font-size="21" font-weight="bold" text-anchor="middle" fill="#333" font-family="Liberation Sans">F</text>
<text x="1107.5" y="300" font-size="13" font-weight="bold" text-anchor="middle" fill="#333" font-family="Liberation Sans">Y</text>
<path d="M1117 289 L1106 307" stroke="#333" stroke-width="2"/>
<text x="1116" y="307.5" font-size="14" font-weight="bold" text-anchor="middle" fill="#333" font-family="Liberation Sans">x</text>
<path d="M1108 331 V327 Q1108 323.5 1112 323.5 Q1116 323.5 1116 327 V331" fill="none" stroke="#222" stroke-width="2"/>
<rect x="1106.5" y="330" width="11" height="13" rx="1" fill="#e8e8e8" stroke="#222" stroke-width="1.4"/>
<rect x="1107.5" y="337" width="9" height="5.5" fill="#6a4a30"/>
<circle cx="1112" cy="368" r="9.2" fill="#6a4028"/>
<circle cx="1112" cy="368" r="7.2" fill="#fbf4e8" stroke="#c0a080" stroke-width="0.6"/>
<path d="M1112 363.5 V368.5 H1115" stroke="#222" stroke-width="1" fill="none"/>
<text x="1111.5" y="407" font-size="13.5" font-weight="bold" text-anchor="middle" fill="#333" font-family="Liberation Sans">CO</text>
<rect x="1105.5" y="429.5" width="12.5" height="17" rx="1" fill="#eeeeee" stroke="#333" stroke-width="1.4"/>
<rect x="1107.5" y="431.5" width="8.5" height="5" fill="#5a7aa0"/>
<circle cx="1108.5" cy="442" r="1.2" fill="#b03030"/><rect x="1111" y="441" width="5" height="2.2" fill="#444"/>

</svg>
<!-- charts -->
<div class="a" style="left:1132px;top:500px;width:240px;height:189px;background:linear-gradient(90deg,#e4ebf2,#d4dee8);border-left:1px solid #5a646e;border-bottom:1px solid #5a646e"></div>
<div class="a" style="left:1138px;top:503px;width:235px;height:180px;border-left:1px solid #2a2a2a;border-bottom:1px solid #2a2a2a;background:#fff"></div>
<svg class="a" style="left:1139px;top:503px" width="227" height="179" viewBox="1139 503 227 179">
<rect x="1139" y="503" width="227" height="179" fill="#fff"/>
<rect x="1167" y="503" width="199" height="49" fill="#fbfbfb"/>
<rect x="1167" y="553" width="199" height="129" fill="#fbfbfb"/>
<line x1="1167.5" y1="503" x2="1167.5" y2="682" stroke="#c8c8c8"/>
<line x1="1139" y1="552.5" x2="1366" y2="552.5" stroke="#a8a8a8"/>
<g stroke="#6a6a6a" stroke-width="1" stroke-dasharray="3 3" shape-rendering="crispEdges">
<line x1="1168" y1="504.5" x2="1366" y2="504.5"/>
<line x1="1168" y1="514.5" x2="1366" y2="514.5"/>
<line x1="1168" y1="524.5" x2="1366" y2="524.5"/>
<line x1="1168" y1="534.5" x2="1366" y2="534.5"/>
<line x1="1168" y1="544.5" x2="1366" y2="544.5"/>
<line x1="1168" y1="565.5" x2="1366" y2="565.5"/>
<line x1="1168" y1="576.5" x2="1366" y2="576.5"/>
<line x1="1168" y1="587.5" x2="1366" y2="587.5"/>
<line x1="1168" y1="598.5" x2="1366" y2="598.5"/>
<line x1="1168" y1="609.5" x2="1366" y2="609.5"/>
<line x1="1168" y1="620.5" x2="1366" y2="620.5"/>
<line x1="1168" y1="631.5" x2="1366" y2="631.5"/>
<line x1="1168" y1="642.5" x2="1366" y2="642.5"/>
<line x1="1168" y1="653.5" x2="1366" y2="653.5"/>
</g>
<path d="M1168.0 547.5 L1170.0 545.5 H1187.5 L1189.5 547.5 L1187.5 549.5 H1170.0 Z" fill="#1f6a2a" stroke="#9fe0d0" stroke-width="0.8"/>
<path d="M1168.0 666.5 L1170.0 664.5 H1187.5 L1189.5 666.5 L1187.5 668.5 H1170.0 Z" fill="#1f6a2a" stroke="#9fe0d0" stroke-width="0.8"/>
<text x="1178.8" y="543" font-size="8" font-weight="bold" text-anchor="middle" fill="#777" stroke="#222" stroke-width="0.6" paint-order="stroke" font-family="Liberation Sans" letter-spacing="-0.4">0,0</text>
<text x="1178.8" y="662" font-size="8" font-weight="bold" text-anchor="middle" fill="#777" stroke="#222" stroke-width="0.6" paint-order="stroke" font-family="Liberation Sans">0</text>
<text x="1178.8" y="680" font-size="13" text-anchor="middle" fill="#000" font-family="Liberation Sans">1</text>
<path d="M1192.1 547.5 L1194.1 545.5 H1211.6 L1213.6 547.5 L1211.6 549.5 H1194.1 Z" fill="#1f6a2a" stroke="#9fe0d0" stroke-width="0.8"/>
<path d="M1192.1 666.5 L1194.1 664.5 H1211.6 L1213.6 666.5 L1211.6 668.5 H1194.1 Z" fill="#1f6a2a" stroke="#9fe0d0" stroke-width="0.8"/>
<text x="1202.9" y="543" font-size="8" font-weight="bold" text-anchor="middle" fill="#777" stroke="#222" stroke-width="0.6" paint-order="stroke" font-family="Liberation Sans" letter-spacing="-0.4">0,0</text>
<text x="1202.9" y="662" font-size="8" font-weight="bold" text-anchor="middle" fill="#777" stroke="#222" stroke-width="0.6" paint-order="stroke" font-family="Liberation Sans">0</text>
<text x="1202.9" y="680" font-size="13" text-anchor="middle" fill="#000" font-family="Liberation Sans">2</text>
<path d="M1216.2 547.5 L1218.2 545.5 H1235.7 L1237.7 547.5 L1235.7 549.5 H1218.2 Z" fill="#1f6a2a" stroke="#9fe0d0" stroke-width="0.8"/>
<path d="M1216.2 666.5 L1218.2 664.5 H1235.7 L1237.7 666.5 L1235.7 668.5 H1218.2 Z" fill="#1f6a2a" stroke="#9fe0d0" stroke-width="0.8"/>
<text x="1227.0" y="543" font-size="8" font-weight="bold" text-anchor="middle" fill="#777" stroke="#222" stroke-width="0.6" paint-order="stroke" font-family="Liberation Sans" letter-spacing="-0.4">0,0</text>
<text x="1227.0" y="662" font-size="8" font-weight="bold" text-anchor="middle" fill="#777" stroke="#222" stroke-width="0.6" paint-order="stroke" font-family="Liberation Sans">0</text>
<text x="1227.0" y="680" font-size="13" text-anchor="middle" fill="#000" font-family="Liberation Sans">3</text>
<path d="M1240.3 547.5 L1242.3 545.5 H1259.8 L1261.8 547.5 L1259.8 549.5 H1242.3 Z" fill="#1f6a2a" stroke="#9fe0d0" stroke-width="0.8"/>
<path d="M1240.3 666.5 L1242.3 664.5 H1259.8 L1261.8 666.5 L1259.8 668.5 H1242.3 Z" fill="#1f6a2a" stroke="#9fe0d0" stroke-width="0.8"/>
<text x="1251.1" y="543" font-size="8" font-weight="bold" text-anchor="middle" fill="#777" stroke="#222" stroke-width="0.6" paint-order="stroke" font-family="Liberation Sans" letter-spacing="-0.4">0,0</text>
<text x="1251.1" y="662" font-size="8" font-weight="bold" text-anchor="middle" fill="#777" stroke="#222" stroke-width="0.6" paint-order="stroke" font-family="Liberation Sans">0</text>
<text x="1251.1" y="680" font-size="13" text-anchor="middle" fill="#000" font-family="Liberation Sans">4</text>
<path d="M1264.4 547.5 L1266.4 545.5 H1283.9 L1285.9 547.5 L1283.9 549.5 H1266.4 Z" fill="#1f6a2a" stroke="#9fe0d0" stroke-width="0.8"/>
<path d="M1264.4 666.5 L1266.4 664.5 H1283.9 L1285.9 666.5 L1283.9 668.5 H1266.4 Z" fill="#1f6a2a" stroke="#9fe0d0" stroke-width="0.8"/>
<text x="1275.2" y="543" font-size="8" font-weight="bold" text-anchor="middle" fill="#777" stroke="#222" stroke-width="0.6" paint-order="stroke" font-family="Liberation Sans" letter-spacing="-0.4">0,0</text>
<text x="1275.2" y="662" font-size="8" font-weight="bold" text-anchor="middle" fill="#777" stroke="#222" stroke-width="0.6" paint-order="stroke" font-family="Liberation Sans">0</text>
<text x="1275.2" y="680" font-size="13" text-anchor="middle" fill="#000" font-family="Liberation Sans">5</text>
<path d="M1288.5 547.5 L1290.5 545.5 H1308.0 L1310.0 547.5 L1308.0 549.5 H1290.5 Z" fill="#1f6a2a" stroke="#9fe0d0" stroke-width="0.8"/>
<path d="M1288.5 666.5 L1290.5 664.5 H1308.0 L1310.0 666.5 L1308.0 668.5 H1290.5 Z" fill="#1f6a2a" stroke="#9fe0d0" stroke-width="0.8"/>
<text x="1299.3" y="543" font-size="8" font-weight="bold" text-anchor="middle" fill="#777" stroke="#222" stroke-width="0.6" paint-order="stroke" font-family="Liberation Sans" letter-spacing="-0.4">0,0</text>
<text x="1299.3" y="662" font-size="8" font-weight="bold" text-anchor="middle" fill="#777" stroke="#222" stroke-width="0.6" paint-order="stroke" font-family="Liberation Sans">0</text>
<text x="1299.3" y="680" font-size="13" text-anchor="middle" fill="#000" font-family="Liberation Sans">6</text>
<path d="M1312.6 547.5 L1314.6 545.5 H1332.1 L1334.1 547.5 L1332.1 549.5 H1314.6 Z" fill="#1f6a2a" stroke="#9fe0d0" stroke-width="0.8"/>
<path d="M1312.6 666.5 L1314.6 664.5 H1332.1 L1334.1 666.5 L1332.1 668.5 H1314.6 Z" fill="#1f6a2a" stroke="#9fe0d0" stroke-width="0.8"/>
<text x="1323.4" y="543" font-size="8" font-weight="bold" text-anchor="middle" fill="#777" stroke="#222" stroke-width="0.6" paint-order="stroke" font-family="Liberation Sans" letter-spacing="-0.4">0,0</text>
<text x="1323.4" y="662" font-size="8" font-weight="bold" text-anchor="middle" fill="#777" stroke="#222" stroke-width="0.6" paint-order="stroke" font-family="Liberation Sans">0</text>
<text x="1323.4" y="680" font-size="13" text-anchor="middle" fill="#000" font-family="Liberation Sans">7</text>
<path d="M1336.7 547.5 L1338.7 545.5 H1356.2 L1358.2 547.5 L1356.2 549.5 H1338.7 Z" fill="#1f6a2a" stroke="#9fe0d0" stroke-width="0.8"/>
<path d="M1336.7 666.5 L1338.7 664.5 H1356.2 L1358.2 666.5 L1356.2 668.5 H1338.7 Z" fill="#1f6a2a" stroke="#9fe0d0" stroke-width="0.8"/>
<text x="1347.5" y="543" font-size="8" font-weight="bold" text-anchor="middle" fill="#777" stroke="#222" stroke-width="0.6" paint-order="stroke" font-family="Liberation Sans" letter-spacing="-0.4">0,0</text>
<text x="1347.5" y="662" font-size="8" font-weight="bold" text-anchor="middle" fill="#777" stroke="#222" stroke-width="0.6" paint-order="stroke" font-family="Liberation Sans">0</text>
<text x="1347.5" y="680" font-size="13" text-anchor="middle" fill="#000" font-family="Liberation Sans">8</text>
<text x="1144" y="531" font-size="12" fill="#000" font-family="Liberation Sans">0,5</text>
<text x="1144" y="551" font-size="12" fill="#000" font-family="Liberation Sans">0</text>
<text x="1144" y="566" font-size="12" fill="#000" font-family="Liberation Sans">100</text>
<text x="1144" y="581.5" font-size="12" fill="#000" font-family="Liberation Sans">80</text>
<text x="1144" y="604" font-size="12" fill="#000" font-family="Liberation Sans">60</text>
<text x="1144" y="626.5" font-size="12" fill="#000" font-family="Liberation Sans">40</text>
<text x="1144" y="647.5" font-size="12" fill="#000" font-family="Liberation Sans">20</text>
<text x="1144" y="669.5" font-size="12" fill="#000" font-family="Liberation Sans">0</text>
<rect x="1325" y="555" width="41" height="29" fill="#fbfbfb"/>
<rect x="1147" y="503" width="1.6" height="8" fill="#000"/>
<text x="1329" y="566.5" font-size="12" fill="#000" font-family="Liberation Sans" letter-spacing="-0.5">У.ЗСК</text>
<text x="1327" y="581.5" font-size="13" fill="#000" font-family="Liberation Sans">Δ</text><text x="1338" y="581.5" font-size="13" fill="#000" font-family="Liberation Sans" font-weight="bold">=</text><text x="1350" y="581.5" font-size="13.5" fill="#000" font-family="Liberation Sans" font-weight="bold">0</text>
</svg>
<div class="a" style="left:1169px;top:558px;width:44px;height:21px;border:1px solid #707070;border-radius:3px;background:linear-gradient(#f2f2f2 0%,#ebebeb 50%,#dddddd 51%,#cfcfcf 100%)"></div>
<div class="a" style="left:1173px;top:563px;width:2px;height:3px;background:#000"></div>
<div class="a" style="left:1201px;top:567px;width:0;height:0;border-left:4px solid transparent;border-right:4px solid transparent;border-top:5px solid #000"></div>
<div class="a" style="left:1162px;top:688px;width:201px;height:47px;border:1px solid #a0a0a0;background:#f0f0f0;box-shadow:inset 1px 1px #fff"></div>
<div class="a" style="left:1218px;top:678px;font-size:56px;font-weight:bold;line-height:62px;color:#000;letter-spacing:-1.8px">240</div>
<div class="a" style="left:1310px;top:716px;font-size:14px;font-weight:bold;line-height:16px;color:#000">об/мин</div>
<!-- floating panel -->
<div class="a" style="left:1128px;top:70px;width:245px;height:435px;border:1px solid #5a6472;border-radius:5px 0 0 0;background:linear-gradient(#d6e2ee,#dde7f1 30px,#dfe8f1)"></div>
<div class="a" style="left:1129px;top:71px;width:244px;height:433px;border:1px solid #f4f8fc;border-radius:4px 0 0 0"></div>
<div class="a" style="left:1136px;top:76px;font-size:12px;line-height:14px;color:#000">Общее</div>
<div class="a" style="left:1360px;top:75px;width:12px;height:16px;border:1px solid #6a7482;border-radius:3px;background:linear-gradient(#f4f6f8,#d8dee6)"></div>
<div class="a" style="left:1134px;top:94px;width:240px;height:405px;border:1px solid #3a3f48;border-right:none;background:#f0f0f0"></div>
<!-- group Экран -->
<div class="a" style="left:1139px;top:105px;width:230px;height:77px;border:1px solid #d5dfe5;border-radius:3px;box-shadow:inset 1px 1px #fff"></div>
<div class="a" style="left:1143px;top:98px;padding:0 2px;background:#f0f0f0;font-size:12px;line-height:14px">Экран</div>
<div class="a" style="left:1146px;top:123px;font-size:12px;line-height:14px;color:#1a1a1a;letter-spacing:-0.6px">Текущий кадр</div>
<div class="a" style="left:1146px;top:152px;font-size:12px;line-height:14px;color:#1a1a1a;letter-spacing:-0.45px">Всего кадров</div>
<div class="a" style="left:1230px;top:114px;width:77px;height:30px;border:1px solid #8f8f8f;background:#fff"></div>
<div class="a" style="left:1233px;top:118px;font-size:17px;line-height:20px;color:#505050">280</div>
<div class="a" style="left:1230px;top:146px;width:77px;height:30px;border:1px solid #8f8f8f;background:#fff"></div>
<div class="a" style="left:1233px;top:150px;font-size:17px;line-height:20px;color:#505050">600</div>
<div class="a" style="left:1290px;top:117px;width:13px;height:11px;border:1px solid #555;border-radius:3px;background:linear-gradient(#fafafa,#e4e4e4)"></div>
<div class="a" style="left:1292px;top:120px;width:0;height:0;border-left:4.5px solid transparent;border-right:4.5px solid transparent;border-bottom:5px solid #000"></div>
<div class="a" style="left:1290px;top:129px;width:13px;height:12px;border:1px solid #555;border-radius:3px;background:linear-gradient(#fafafa,#d8d8d8)"></div>
<div class="a" style="left:1292px;top:133px;width:0;height:0;border-left:4.5px solid transparent;border-right:4.5px solid transparent;border-top:5px solid #000"></div>
<div class="a" style="left:1290px;top:149px;width:13px;height:11px;border:1px solid #555;border-radius:3px;background:linear-gradient(#fafafa,#e4e4e4)"></div>
<div class="a" style="left:1292px;top:152px;width:0;height:0;border-left:4.5px solid transparent;border-right:4.5px solid transparent;border-bottom:5px solid #000"></div>
<div class="a" style="left:1290px;top:161px;width:13px;height:12px;border:1px solid #555;border-radius:3px;background:linear-gradient(#fafafa,#d8d8d8)"></div>
<div class="a" style="left:1292px;top:165px;width:0;height:0;border-left:4.5px solid transparent;border-right:4.5px solid transparent;border-top:5px solid #000"></div>
<div class="a" style="left:1311px;top:119px;width:43px;height:19px;border:1px solid #6a6a6a;border-radius:3px;background:linear-gradient(#f2f2f2 0%,#ebebeb 50%,#d2d2d2 51%,#cfcfcf 100%)"></div>
<div class="a" style="left:1313px;top:122px;font-size:10px;line-height:12px;letter-spacing:-0.5px;color:#000">Очистить</div>
<!-- group Захват кадров -->
<div class="a" style="left:1139px;top:190px;width:230px;height:70px;border:1px solid #d5dfe5;border-radius:3px;box-shadow:inset 1px 1px #fff"></div>
<div class="a" style="left:1144px;top:183px;padding:0 2px;background:#f0f0f0;font-size:12px;line-height:14px;letter-spacing:-0.4px">Захват кадров</div>
<div class="a" style="left:1146px;top:203px;width:12px;height:12px;border-radius:50%;border:1px solid #b0b0b0;background:radial-gradient(#a8a8a8 30%,#e8e8e8 40%,#f4f4f4)"></div>
<div class="a" style="left:1162px;top:202px;font-size:12px;line-height:14px;color:#8a8a8a">Все</div>
<div class="a" style="left:1146px;top:223px;width:12px;height:12px;border-radius:50%;border:1px solid #c8c8c8;background:radial-gradient(#e8e8e8,#f8f8f8)"></div>
<div class="a" style="left:1162px;top:222px;font-size:12px;line-height:14px;color:#8a8a8a;letter-spacing:-0.45px">Ограничено</div>
<div class="a" style="left:1146px;top:242px;width:12px;height:12px;border:1px solid #b8b8b8;background:#f4f4f4"></div>
<div class="a" style="left:1148px;top:241px;font-size:11px;line-height:13px;color:#a8a8a8">✓</div>
<div class="a" style="left:1162px;top:242px;font-size:12px;line-height:14px;color:#8a8a8a;letter-spacing:-0.2px">Циклически</div>
<div class="a" style="left:1242px;top:199px;width:1px;height:57px;background:#a0a0a0;box-shadow:1px 0 #fff"></div>
<div class="a" style="left:1251px;top:203px;font-size:12px;line-height:14px;color:#9a9a9a">с</div>
<div class="a" style="left:1250px;top:231px;font-size:12px;line-height:14px;color:#9a9a9a">по</div>
<div class="a" style="left:1274px;top:199px;width:57px;height:22px;border:1px solid #b4b4b4;background:#f4f4f4"></div>
<div class="a" style="left:1277px;top:202px;font-size:12px;line-height:14px;color:#8a8a8a">1</div>
<div class="a" style="left:1274px;top:227px;width:57px;height:22px;border:1px solid #b4b4b4;background:#f4f4f4"></div>
<div class="a" style="left:1277px;top:231px;font-size:12px;line-height:14px;color:#8a8a8a">600</div>
<div class="a" style="left:1314px;top:202px;width:13px;height:8px;border:1px solid #aaa;border-radius:2px;background:#f0f0f0"></div>
<div class="a" style="left:1316px;top:204px;width:0;height:0;border-left:4.5px solid transparent;border-right:4.5px solid transparent;border-bottom:4px solid #aaa"></div>
<div class="a" style="left:1314px;top:210px;width:13px;height:8px;border:1px solid #aaa;border-radius:2px;background:#f0f0f0"></div>
<div class="a" style="left:1316px;top:212px;width:0;height:0;border-left:4.5px solid transparent;border-right:4.5px solid transparent;border-top:4px solid #aaa"></div>
<div class="a" style="left:1314px;top:230px;width:13px;height:8px;border:1px solid #aaa;border-radius:2px;background:#f0f0f0"></div>
<div class="a" style="left:1316px;top:232px;width:0;height:0;border-left:4.5px solid transparent;border-right:4.5px solid transparent;border-bottom:4px solid #aaa"></div>
<div class="a" style="left:1314px;top:238px;width:13px;height:8px;border:1px solid #aaa;border-radius:2px;background:#f0f0f0"></div>
<div class="a" style="left:1316px;top:240px;width:0;height:0;border-left:4.5px solid transparent;border-right:4.5px solid transparent;border-top:4px solid #aaa"></div>
<!-- nav + slider -->
<div class="a" style="left:1141px;top:266px;width:13px;height:20px;border:1px solid #8a8a8a;border-radius:3px;background:#f2f2f2"></div>
<div class="a" style="left:1159px;top:266px;width:13px;height:20px;border:1px solid #8a8a8a;border-radius:3px;background:#f2f2f2"></div>
<svg class="a" style="left:1141px;top:270px" width="32" height="12" viewBox="0 0 32 12"><g fill="none" stroke="#6a6a6a" stroke-width="1"><path d="M6 2 L2.5 5.5 L6 9 M11.5 2 L8 5.5 L11.5 9"/><path d="M20.5 2 L24 5.5 L20.5 9 M26 2 L29.5 5.5 L26 9"/></g></svg>
<div class="a" style="left:1151px;top:296px;width:14px;height:191px;background:#e6eaee;border:1px solid #eef1f4"></div>
<div class="a" style="left:1143px;top:300px;width:5px;height:185px;background:repeating-linear-gradient(#f0f0f0 0,#f0f0f0 4px,#d4d4d4 4px,#d4d4d4 5px)"></div>
<div class="a" style="left:1152px;top:388px;width:12px;height:8px;border:1px solid #9a9a9a;border-radius:2px;background:linear-gradient(#fcfcfc,#e0e0e0)"></div>
<!-- list -->
<div class="a" style="left:1175px;top:263px;width:200px;height:232px;border:1px solid #6a6a6a;border-right:none;background:#fff"></div>
<div class="a" style="left:1213px;top:364px;width:160px;height:33px;background:#eeeeee"></div>
<svg class="a" style="left:1188px;top:266px" width="24" height="30" viewBox="0 0 24 30"><defs><linearGradient id="gtri" x1="0" y1="0" x2="1" y2="1"><stop offset="0" stop-color="#a8d090"/><stop offset="0.5" stop-color="#3a8a2a"/><stop offset="1" stop-color="#1a5a10"/></linearGradient></defs><path d="M3 1 L22 15 L3 29 Z" fill="url(#gtri)" stroke="#1a2a18" stroke-width="1.4" stroke-linejoin="round"/></svg>
<div class="a" style="left:1215px;top:274px;font-size:11px;line-height:14px;color:#111">Внутренняя синхронизация</div>
<svg class="a" style="left:1181px;top:297px" width="30" height="34" viewBox="0 0 30 34"><defs><linearGradient id="pg297" x1="0" y1="0" x2="1" y2="0.3"><stop offset="0" stop-color="#d0d0d0"/><stop offset="0.5" stop-color="#9a9a9a"/><stop offset="1" stop-color="#6a6a6a"/></linearGradient></defs><path d="M2.5 9 Q1.5 2 8 1.5 Q11.5 1.5 13.5 5 L27.5 30.5 L23.5 33 L17 22 L15.5 28 L11.5 28.5 L10.5 20 Q3 12 2.5 9 Z" fill="url(#pg297)" stroke="#111" stroke-width="1.3" stroke-linejoin="round"/><circle cx="11.5" cy="19.5" r="1.3" fill="#111"/></svg>
<div class="a" style="left:1215px;top:307px;font-size:11px;line-height:14px;color:#111">Внешняя синхронизация</div>
<svg class="a" style="left:1181px;top:330px" width="30" height="34" viewBox="0 0 30 34"><defs><linearGradient id="pg330" x1="0" y1="0" x2="1" y2="0.3"><stop offset="0" stop-color="#d0d0d0"/><stop offset="0.5" stop-color="#9a9a9a"/><stop offset="1" stop-color="#6a6a6a"/></linearGradient></defs><path d="M2.5 9 Q1.5 2 8 1.5 Q11.5 1.5 13.5 5 L27.5 30.5 L23.5 33 L17 22 L15.5 28 L11.5 28.5 L10.5 20 Q3 12 2.5 9 Z" fill="url(#pg330)" stroke="#111" stroke-width="1.3" stroke-linejoin="round"/><circle cx="11.5" cy="19.5" r="1.3" fill="#111"/></svg>
<div class="a" style="left:1215px;top:340px;font-size:11px;line-height:14px;color:#111">DIS</div>
<svg class="a" style="left:1180px;top:364px" width="34" height="31" viewBox="0 0 34 31"><defs><pattern id="dots" width="3" height="3" patternUnits="userSpaceOnUse"><rect width="3" height="3" fill="#eef4f8"/><rect x="1" y="1" width="1" height="1" fill="#7890a8"/></pattern></defs><rect x="0" y="0" width="34" height="31" fill="url(#dots)"/><path d="M1 1 H10 L17 12 L16 24 L12 27 L1 18 Z" fill="#7a9ac0"/><path d="M3 12 Q8 10 12 16 L11 22 L3 17 Z" fill="#c8c0a0"/><path d="M10 3 L17 12 L30 26 L12 22 Z" fill="#e8f4f8" stroke="#1a2a3a" stroke-width="1.2" stroke-linejoin="round"/><path d="M20 3 L33 2 M21 6 L33 8 M22 10 L32 12 M18 8 L30 6" stroke="#1a2a4a" stroke-width="1.3"/><circle cx="12" cy="22" r="1.5" fill="#1a2a3a"/></svg>
<div class="a" style="left:1215px;top:373px;font-size:11px;line-height:14px;color:#111">Самописец 10 сек</div>
<svg class="a" style="left:1180px;top:398px" width="34" height="30" viewBox="0 0 34 30"><path d="M1 26.2 H16.9 V3.8 H33" fill="none" stroke="#2a2a2a" stroke-width="4.2"/><path d="M1 26.2 H16.9 V3.8 H33" fill="none" stroke="#c8c8c8" stroke-width="1.3"/><path d="M9.6 19.8 L16.7 7 L24.2 19.8" fill="none" stroke="#2a2a2a" stroke-width="3.2" stroke-linejoin="miter"/><path d="M10.2 19.3 L16.7 7.5 L23.6 19.3" fill="none" stroke="#b8b8b8" stroke-width="1"/></svg>
<div class="a" style="left:1215px;top:406px;font-size:11px;line-height:14px;color:#111">Канал 1</div>
<svg class="a" style="left:1180px;top:431px" width="34" height="30" viewBox="0 0 34 30"><path d="M1 26.2 H16.9 V3.8 H33" fill="none" stroke="#2a2a2a" stroke-width="4.2"/><path d="M1 26.2 H16.9 V3.8 H33" fill="none" stroke="#c8c8c8" stroke-width="1.3"/><path d="M9.6 19.8 L16.7 7 L24.2 19.8" fill="none" stroke="#2a2a2a" stroke-width="3.2" stroke-linejoin="miter"/><path d="M10.2 19.3 L16.7 7.5 L23.6 19.3" fill="none" stroke="#b8b8b8" stroke-width="1"/></svg>
<div class="a" style="left:1215px;top:439px;font-size:11px;line-height:14px;color:#111">Канал 2</div>

<!-- bottom measurement panel -->
<div class="a" style="left:2px;top:682px;width:426px;height:53px;border:1px solid #a0a0a0;background:#f0f0f0;box-shadow:inset 1px 1px #fff"></div>
<div class="a" style="left:6px;top:690px;font-size:13px;font-weight:bold;line-height:14px">Л1</div>
<div class="a" style="left:115px;top:690px;font-size:13px;font-weight:bold;line-height:14px">Л2</div>
<div class="a" style="left:119px;top:713px;font-size:13px;font-weight:bold;line-height:14px">-</div>
<div class="a" style="left:225px;top:714px;font-size:13px;font-weight:bold;line-height:14px">=</div>
<div class="a" style="left:26px;top:688px;width:84px;height:19px;border:1px solid #d0d0d0;border-right-color:#fff;border-bottom-color:#fff;background:#ececec;text-align:center;font-size:12px;font-weight:bold;line-height:17px">196,06°</div>
<div class="a" style="left:26px;top:712px;width:84px;height:19px;border:1px solid #d0d0d0;border-right-color:#fff;border-bottom-color:#fff;background:#ececec;text-align:center;font-size:12px;font-weight:bold;line-height:17px">1,05кВ</div>
<div class="a" style="left:138px;top:688px;width:84px;height:19px;border:1px solid #d0d0d0;border-right-color:#fff;border-bottom-color:#fff;background:#ececec;text-align:center;font-size:12px;font-weight:bold;line-height:17px">0,09°</div>
<div class="a" style="left:138px;top:712px;width:84px;height:19px;border:1px solid #d0d0d0;border-right-color:#fff;border-bottom-color:#fff;background:#ececec;text-align:center;font-size:12px;font-weight:bold;line-height:17px">5,17кВ</div>
<div class="a" style="left:236px;top:688px;width:84px;height:19px;border:1px solid #d0d0d0;border-right-color:#fff;border-bottom-color:#fff;background:#ececec;text-align:center;font-size:12px;font-weight:bold;line-height:17px">195,97°</div>
<div class="a" style="left:236px;top:712px;width:84px;height:19px;border:1px solid #d0d0d0;border-right-color:#fff;border-bottom-color:#fff;background:#ececec;text-align:center;font-size:12px;font-weight:bold;line-height:17px">-4,12кВ</div>
<div class="a" style="left:327px;top:689px;width:46px;height:18px;border:1px solid #3c6a90;border-radius:3px;background:linear-gradient(#e4f2fa 0%,#c8e4f6 45%,#8ec8ec 55%,#6cb4e4 100%)"></div>
<div class="a" style="left:327px;top:690px;width:46px;text-align:center;font-size:12px;font-weight:bold;line-height:12px">°</div>
<div class="tb" style="left:378px;top:689px;width:46px;height:18px;border-color:#707070"></div>
<div class="a" style="left:378px;top:690px;width:46px;text-align:center;font-size:14px;font-weight:bold;line-height:16px">Сек</div>
<div class="tb" style="left:327px;top:713px;width:46px;height:18px;border-color:#707070"></div>
<div class="a" style="left:325px;top:714px;width:50px;text-align:center;font-size:13.5px;font-weight:bold;line-height:16px;letter-spacing:-0.5px">об/мин</div>
<div class="tb" style="left:378px;top:713px;width:46px;height:18px;border-color:#707070"></div>
<div class="a" style="left:378px;top:714px;width:46px;text-align:center;font-size:14px;font-weight:bold;line-height:16px">Гц</div>

<!-- taskbar -->
<div class="a" style="left:0;top:738px;width:1366px;height:30px;background:linear-gradient(#8ba0b8 0%,#90a6bd 40%,#889db4 100%);border-top:1px solid #3a4654"></div>
<div class="a" style="left:0;top:739px;width:1366px;height:1px;background:#b4c4d4;opacity:0.6"></div>
<!-- start orb -->
<div class="a" style="left:8px;top:732px;width:38px;height:38px;border-radius:50%;background:radial-gradient(circle,rgba(200,230,255,0.5) 60%,rgba(200,230,255,0) 72%)"></div>
<div class="a" style="left:9px;top:733px;width:36px;height:36px;border-radius:50%;background:radial-gradient(circle at 50% 85%,#60e0ff 0%,#2aa0e0 30%,#2a6aa8 60%,#1a3a6a 90%);border:1px solid #14284a"></div>
<div class="a" style="left:11px;top:734px;width:32px;height:17px;border-radius:16px 16px 10px 10px;background:linear-gradient(rgba(255,255,255,0.6),rgba(210,230,245,0.25))"></div>
<svg class="a" style="left:16px;top:740px" width="22" height="20" viewBox="0 0 22 20"><path d="M2 4 Q6 1.5 10 4 L9 9.5 Q5 7.5 1 9.5 Z" fill="#f0602a"/><path d="M11 4.5 Q15 6.5 20 4 L19 10 Q15 11.5 10 10 Z" fill="#7ac030"/><path d="M0.8 10.5 Q5 8.5 8.8 10.5 L8 16 Q4 14 0 16 Z" fill="#30a8f0"/><path d="M9.8 11 Q14.5 12.5 18.8 11 L18 17 Q13.5 18.5 9 16.5 Z" fill="#f8c020"/></svg>
<!-- quick launch -->
<svg class="a" style="left:72px;top:744px" width="19" height="18" viewBox="0 0 19 18"><circle cx="10" cy="9" r="6.8" fill="#2a90d8"/><circle cx="10" cy="9" r="6.8" fill="none" stroke="#1a5a9a" stroke-width="0.8"/><path d="M6 9.5 H14.5 Q14.5 5 10 5 Q6 5 6 9.5 Q6 13.5 10.5 13.5 Q13 13.5 14 11.5" fill="none" stroke="#e8f6ff" stroke-width="1.8"/><path d="M1.5 16 Q-0.5 11 6 5.5 Q13 0 16.5 1.5 Q18.5 3.5 14 8" fill="none" stroke="#e8d088" stroke-width="1.6"/></svg>
<div class="a" style="left:120px;top:744px;width:15px;height:16px;border-radius:50%;background:radial-gradient(circle at 50% 40%,#e83040,#b01020 60%,#700810)"></div>
<div class="a" style="left:125px;top:747px;width:5px;height:10px;border-radius:50%;background:#f8a0b0;box-shadow:0 0 0 1px #e06070"></div>
<svg class="a" style="left:164px;top:744px" width="18" height="18" viewBox="0 0 18 18"><circle cx="9" cy="9" r="8" fill="#5a6a90"/><circle cx="10.5" cy="6.5" r="3.5" fill="#9ab0d0"/><path d="M1.5 5 Q0 13 6 16.5 Q12 18.5 16.5 13 Q17.5 10 16 8 Q15 12 11 12.5 Q7 12.5 6 9 Q5.5 6 8 3.5 Q9.5 2 12 2.5 Q8 0 4 2 Q2 3.5 1.5 5 Z" fill="#e8781a" stroke="#9a4a10" stroke-width="0.5"/><path d="M3 9 Q4 14 9 15" fill="none" stroke="#f8b050" stroke-width="1.2"/></svg>
<!-- task buttons -->
<div class="a" style="left:198px;top:739px;width:159px;height:29px;border:1px solid #3e4e60;border-radius:3px;background:linear-gradient(rgba(255,255,255,0.38),rgba(255,255,255,0.12) 50%,rgba(255,255,255,0.05));box-shadow:inset 0 0 0 1px rgba(255,255,255,0.35)"></div>
<svg class="a" style="left:207px;top:745px" width="16" height="16" viewBox="0 0 16 16"><rect x="1" y="1" width="14" height="14" rx="2" fill="#8080e0" stroke="#4a4aa0"/><circle cx="8" cy="8" r="5" fill="#c8c8f8"/><circle cx="8" cy="8" r="1.5" fill="#4a4aa0"/></svg>
<div class="a" style="left:227px;top:745px;font-size:11.5px;line-height:15px;color:#fff;text-shadow:0 0 3px #000, 0 0 1px #203040">DVD RW дисковод (E...</div>
<div class="a" style="left:372px;top:745px;width:17px;height:16px;border:1px solid #c0c0c0;background:linear-gradient(#f0e8c8,#d0c090)"></div>
<div class="a" style="left:374px;top:747px;width:13px;height:12px;border-radius:50%;background:radial-gradient(#f8c040,#d08010)"></div>
<div class="a" style="left:378px;top:750px;width:0;height:0;border-top:3px solid transparent;border-bottom:3px solid transparent;border-left:5px solid #fff"></div>
<div class="a" style="left:406px;top:739px;width:159px;height:29px;border:1px solid #3e4e60;border-radius:3px;background:linear-gradient(rgba(255,255,255,0.38),rgba(255,255,255,0.12) 50%,rgba(255,255,255,0.05));box-shadow:inset 0 0 0 1px rgba(255,255,255,0.35)"></div>
<svg class="a" style="left:414px;top:745px" width="17" height="18" viewBox="0 0 17 18"><path d="M3 1 H12 L16 5 V17 H3 Z" fill="#fff" stroke="#999"/><rect x="1" y="3" width="11" height="4" fill="#a02020"/><path d="M6 15 Q8 8 10 11 Q13 14 6 15" fill="none" stroke="#c02020" stroke-width="1"/></svg>
<div class="a" style="left:435px;top:745px;font-size:11.5px;line-height:15px;color:#fff;text-shadow:0 0 3px #000, 0 0 1px #203040">motodoc3.pdf - Ado...</div>
<div class="a" style="left:568px;top:739px;width:159px;height:29px;border:1px solid #3e4e60;border-radius:3px;background:linear-gradient(rgba(255,255,255,0.62),rgba(255,255,255,0.35) 50%,rgba(255,255,255,0.25));box-shadow:inset 0 0 0 1px rgba(255,255,255,0.5)"></div>
<div class="a" style="left:577px;top:745px;width:16px;height:16px;border-radius:50%;background:radial-gradient(circle at 40% 40%,#e6b088,#a45428 65%,#6a2c10)"></div>
<div class="a" style="left:584px;top:748px;font-size:9px;font-weight:bold;color:#fff;line-height:10px">3</div>
<div class="a" style="left:598px;top:745px;font-size:11.5px;line-height:15px;color:#fff;text-shadow:0 0 3px #000, 0 0 1px #203040">MotoDoc3 2.5.0.110</div>
<!-- tray -->
<div class="a" style="left:1128px;top:743px;font-size:12px;line-height:14px;color:#fff;text-shadow:0 0 2px #3a4a5a">RU</div>
<div class="a" style="left:1159px;top:751px;width:0;height:0;border-left:4.5px solid transparent;border-right:4.5px solid transparent;border-bottom:5px solid #fff;filter:drop-shadow(0 0 1px #334)"></div>
<svg class="a" style="left:1179px;top:746px" width="19" height="17" viewBox="0 0 19 17"><g stroke="#2a3038" stroke-width="0.9" stroke-linejoin="round"><path d="M2 1 V16 H3.5 V1 Z" fill="#fff"/><path d="M3.5 1.5 H11 Q12 4 16 3.5 V10 Q12 10.5 11 8 H3.5 Z" fill="#fff"/></g><circle cx="12.5" cy="12" r="4.3" fill="#e05060" stroke="#a04050" stroke-width="0.6"/><path d="M10.6 10.1 L14.4 13.9 M14.4 10.1 L10.6 13.9" stroke="#fff" stroke-width="1.3"/></svg>
<svg class="a" style="left:1204px;top:746px" width="16" height="17" viewBox="0 0 16 17"><g stroke="#1a2028" stroke-width="1" stroke-linejoin="round"><rect x="1" y="3" width="8" height="13" rx="1" fill="#fff"/><path d="M6 5 H14.5 V7.5 H13 V11 Q13 13 10.5 13 H9.5 V16 H7.5 V13 Q6 13 6 11 Z" fill="#fff"/><path d="M8.5 1 V5 M12 1 V5" stroke-width="1.8"/></g></svg>
<svg class="a" style="left:1228px;top:746px" width="17" height="17" viewBox="0 0 17 17"><rect x="6.5" y="3.5" width="9.5" height="12.5" fill="#8a9a6a" stroke="#1a2028" stroke-width="1"/><g stroke="#1a2028" stroke-width="0.8"><path d="M2 1 V5.5 H7 V1 M4.5 5.5 V15.5" fill="none" stroke="#fff" stroke-width="1.8"/></g><path d="M2 1 V5.5 H7 V1" fill="none" stroke="#1a2028" stroke-width="0.6"/><path d="M9 16 L11.5 10 L14 16 Z" fill="#f8d020" stroke="#5a4a10" stroke-width="0.5"/></svg>
<svg class="a" style="left:1252px;top:748px" width="16" height="14" viewBox="0 0 16 14"><path d="M1 4.5 H4 L8 1 V13 L4 9.5 H1 Z" fill="#fff" stroke="#2a3038" stroke-width="0.9" stroke-linejoin="round"/><path d="M10 4 Q11.5 7 10 10 M12.5 2 Q15 7 12.5 12" fill="none" stroke="#2a3038" stroke-width="2.2"/><path d="M10 4 Q11.5 7 10 10 M12.5 2 Q15 7 12.5 12" fill="none" stroke="#fff" stroke-width="1.2"/></svg>
<div class="a" style="left:1299px;top:746px;font-size:12px;line-height:14px;color:#fff;text-shadow:0 0 2px #3a4a5a">19:14</div>
<div class="a" style="left:1352px;top:739px;width:14px;height:29px;border-left:1px solid #52647a;background:linear-gradient(90deg,rgba(255,255,255,0.35),rgba(255,255,255,0.2));box-shadow:inset 1px 0 rgba(255,255,255,0.4)"></div>

</body></html>
